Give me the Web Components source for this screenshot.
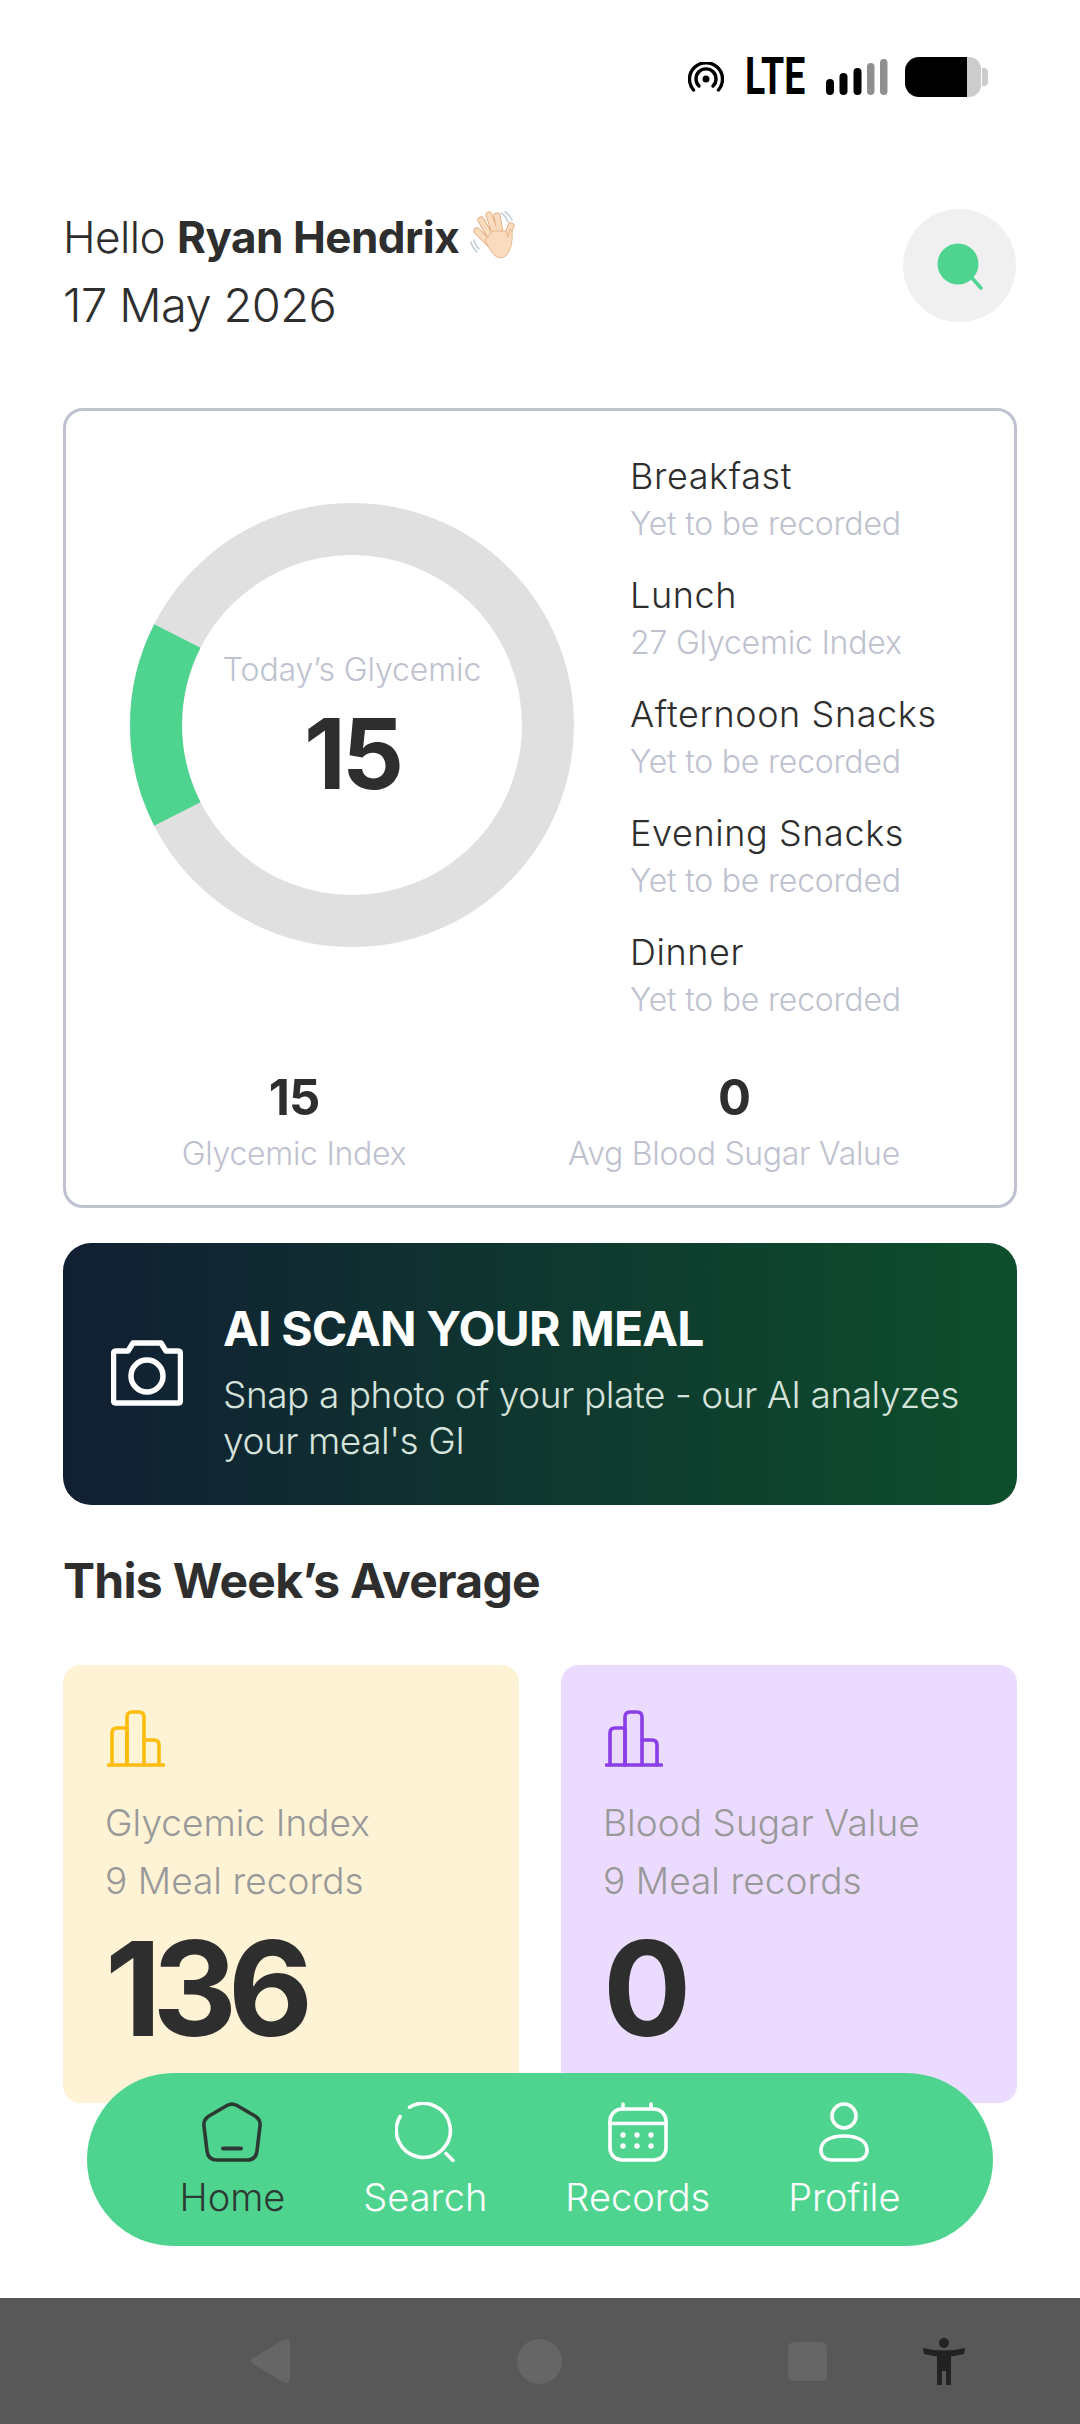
<!DOCTYPE html>
<html lang="en"><head><meta charset="utf-8"><title>Home</title>
<style>
html,body{margin:0;padding:0;background:#fff}
body{font-family:Inter,"Liberation Sans",sans-serif;color:#2e2e2e}
</style></head><body>
<app-screen>
  <status-bar></status-bar>
  <home-header name="Ryan Hendrix" date="17 May 2026"></home-header>
  <glycemic-card>
    <meal-row name="Breakfast" note="Yet to be recorded"></meal-row>
    <meal-row name="Lunch" note="27 Glycemic Index"></meal-row>
    <meal-row name="Afternoon Snacks" note="Yet to be recorded"></meal-row>
    <meal-row name="Evening Snacks" note="Yet to be recorded"></meal-row>
    <meal-row name="Dinner" note="Yet to be recorded"></meal-row>
  </glycemic-card>
  <scan-banner></scan-banner>
  <section-title>This Week’s Average</section-title>
  <week-grid>
    <week-card color="#fff3d6" stroke="#fdbc0d" label="Glycemic Index" value="136"></week-card>
    <week-card color="#ebdcff" stroke="#8a3ee8" label="Blood Sugar Value" value="0"></week-card>
  </week-grid>
  <float-nav slot="overlay">
    <nav-item label="Home" active><svg viewBox="0 0 60 60" width="60" height="60" fill="none" stroke="currentColor" stroke-width="3.6" stroke-linecap="round" stroke-linejoin="round"><path d="M25 3.5Q30 .8 35 3.5L53 14Q59 18 58 24L55 49Q54 58 45 58H15Q6 58 5 49L2 24Q1 18 7 14Z"/><path d="M21 46.500H39" stroke-width="4"/></svg></nav-item>
    <nav-item label="Search"><svg viewBox="0 0 60 60" width="60" height="60" fill="none" stroke="currentColor" stroke-width="3.6" stroke-linecap="round"><path d="M14.500 5.200A27 27 0 1 1 5.200 14.500"/><path d="M51 51.500L58 58.500"/></svg></nav-item>
    <nav-item label="Records"><svg viewBox="0 0 60 60" width="60" height="60" fill="none" stroke="currentColor" stroke-width="3.6" stroke-linecap="round"><rect x="2" y="7" width="56" height="51" rx="12"/><path d="M2 21.500H58M15 2V7M43 2V7"/><g fill="currentColor" stroke="none"><circle cx="15" cy="33" r="2.700"/><circle cx="29" cy="33" r="2.700"/><circle cx="43" cy="33" r="2.700"/><circle cx="15" cy="44" r="2.700"/><circle cx="29" cy="44" r="2.700"/><circle cx="43" cy="44" r="2.700"/></g></svg></nav-item>
    <nav-item label="Profile"><svg viewBox="0 0 50 60" width="50" height="60" fill="none" stroke="currentColor" stroke-width="3.600"><circle cx="25" cy="14" r="12"/><path d="M25 34C37 34 48 38 48 48C48 55 43 58 37 58H13C7 58 2 55 2 48C2 38 13 34 25 34Z"/></svg></nav-item>
  </float-nav>
  <system-nav></system-nav>
</app-screen>
<script>
function def(name, css, html){
  customElements.define(name, class extends HTMLElement{
    connectedCallback(){
      if(this.shadowRoot) return;
      const r=this.attachShadow({mode:'open'});
      const h=typeof html==='function'?html(this):html;
      r.innerHTML='<style>'+css+'</style>'+h;
    }
  });
}
def('app-screen',`:host{display:block;position:relative;width:1080px;height:2424px;overflow:hidden;background:#fff}
.col{display:flex;flex-direction:column;height:100%}`,
`<div class="col"><slot></slot></div><slot name="overlay"></slot>`);

def('status-bar',`:host{display:flex;align-items:center;justify-content:flex-end;height:154px;padding:0 92px 0 0;box-sizing:border-box;width:1080px;color:#000}
.in{display:flex;align-items:center;height:40px}
.lte{display:inline-block;font:700 52px/40px Roboto,sans-serif;width:62px;margin:0 19px 0 21px;transform:scaleX(.72);transform-origin:left center;white-space:nowrap}
svg{display:block}`,
`<div class="in"><svg width="36" height="30" viewBox="0 0 36 30" fill="none" stroke="#000" stroke-width="3.400" stroke-linecap="round"><circle cx="18" cy="17" r="3.500" fill="#000" stroke="none"/><path d="M11 24A10 10 0 1 1 25 24"/><path d="M5.500 28A16.500 16.500 0 1 1 30.500 28"/></svg>
<span class="lte">LTE</span>
<svg width="62" height="36" viewBox="0 0 62 36"><g fill="#000"><rect x="0" y="20" width="8" height="16" rx="4"/><rect x="13.500" y="14" width="8" height="22" rx="4"/><rect x="27.500" y="9" width="8" height="27" rx="4"/></g><g fill="#8f8f8f"><rect x="41" y="4" width="7.500" height="32" rx="3.700"/><rect x="54" y="0" width="7.500" height="36" rx="3.700"/></g></svg>
<svg style="margin-left:17px" width="83" height="40" viewBox="0 0 83 40"><path d="M14 0H62V40H14A14 14 0 0 1 0 26V14A14 14 0 0 1 14 0Z" fill="#000"/><path d="M62 0H64A12 12 0 0 1 76 12V28A12 12 0 0 1 64 40H62Z" fill="#ccc"/><path d="M77 11H79A4 4 0 0 1 83 15V25A4 4 0 0 1 79 29H77Z" fill="#ccc"/></svg></div>`);

def('home-header',`:host{display:flex;justify-content:space-between;align-items:flex-start;padding:0 64px 0 63px;height:254px;box-sizing:border-box;width:1080px}
.hi{font-size:44px;line-height:68px;font-weight:300;letter-spacing:-.5px;display:flex;align-items:center;white-space:pre;margin-top:49px}
.hi b{font-weight:700}
.date{font-size:47px;line-height:68px;font-weight:300;letter-spacing:-.6px}
.btn{width:113px;height:113px;border-radius:50%;background:#f0f0f0;display:flex;align-items:center;justify-content:center;margin-top:55px}
.wave{margin-left:11px;margin-top:-4px}`,
t=>`<div><div class="hi">Hello <b>${t.getAttribute('name')}</b><svg class="wave" width="46" height="48" viewBox="0 0 46 48"><g stroke="#c3ced6" stroke-width="1.500" fill="none" stroke-linecap="round"><path d="M31 2Q36 5 38 11"/><path d="M35 1Q40 4 42 9"/><path d="M1 31Q2 36 7 41"/><path d="M4 29Q5 34 9 38"/></g><g fill="none" stroke-linecap="round"><g stroke="#dfa777" stroke-width="7"><path d="M7 20L20 33M11 9L23 30M19 4L27 28M27 5L31 27M41 15L34 32"/></g><g stroke="#f9dcbe" stroke-width="5.400"><path d="M7 20L20 33M11 9L23 30M19 4L27 28M27 5L31 27M41 15L34 32"/></g></g><path d="M15 29L23 20H36L38 26L40 18L42 20Q43 27 41 35Q38 47 30 47Q22 46 15 29Z" fill="#f9dcbe" stroke="#e3ad7e" stroke-width=".8"/><path d="M22 25L28 26L31 25" stroke="#f9dcbe" stroke-width="5" fill="none"/></svg></div><div class="date">${t.getAttribute('date')}</div></div>
<div class="btn"><svg width="52" height="52" viewBox="0 0 52 52"><circle cx="24" cy="24" r="20.500" fill="#4fd490"/><path d="M38 38L47 48" stroke="#4fd490" stroke-width="3.500" stroke-linecap="round"/></svg></div>`);

def('glycemic-card',`:host{display:block;box-sizing:border-box;width:954px;height:800px;margin:0 63px;border:3px solid #bfc3d0;border-radius:20px;background:#fff}
.top{display:flex;height:657px}
.donut{display:grid;place-items:center;width:446px;height:446px;margin:91px 0 0 63px}
.donut>*{grid-area:1/1}
.mid{display:flex;flex-direction:column;align-items:center;margin-top:8px}
.t{font-size:32px;line-height:40px;font-weight:300;color:#bec2cf;letter-spacing:-.1px}
.n{font-size:97px;line-height:108px;font-weight:700;letter-spacing:-4px;color:#2e2e2e;margin-top:10px}
.list{display:flex;flex-direction:column;gap:23px;margin:40px 0 0 55px}
.stats{display:grid;grid-template-columns:440px 440px;padding-left:8px;text-align:center}
.v{font-size:49px;line-height:60px;font-weight:700;letter-spacing:-1px}
.l{font-size:32px;line-height:44px;font-weight:300;color:#bec2cf;letter-spacing:-.3px;margin-top:4px}`,
`<div class="top"><div class="donut"><svg width="446" height="446" viewBox="0 0 446 446"><circle cx="223" cy="223" r="196" fill="none" stroke="#e0e0e0" stroke-width="52"/><circle cx="223" cy="223" r="196" fill="none" stroke="#4fd490" stroke-width="52" pathLength="100" stroke-dasharray="15 85" stroke-dashoffset="7.500" transform="rotate(180 223 223)"/></svg><div class="mid"><div class="t">Today’s Glycemic</div><div class="n">15</div></div></div><div class="list"><slot></slot></div></div>
<div class="stats"><div><div class="v">15</div><div class="l">Glycemic Index</div></div><div><div class="v">0</div><div class="l">Avg Blood Sugar Value</div></div></div>`);

def('meal-row',`:host{display:block;white-space:nowrap}
.a{font-size:36px;line-height:50px;font-weight:300;letter-spacing:.6px;color:#2e2e2e}
.b{font-size:32px;line-height:46px;font-weight:300;color:#bec2cf;letter-spacing:-.2px}`,
t=>`<div class="a">${t.getAttribute('name')}</div><div class="b">${t.getAttribute('note')}</div>`);

def('scan-banner',`:host{display:flex;align-items:center;box-sizing:border-box;width:954px;height:262px;margin:35px 63px 0;border-radius:28px;background:linear-gradient(90deg,#111f33,#0d4f2c);padding:0 0 0 48px;color:#fff}
svg{flex:none;display:block;margin-right:40px;margin-top:-2px}
.w{padding-top:15px}
.t{font-size:48px;line-height:60px;font-weight:700;letter-spacing:-.85px;white-space:nowrap}
.s{font-size:37px;line-height:46px;font-weight:300;letter-spacing:-.45px;color:#d6e3dc;margin-top:13px;width:780px}`,
`<svg width="72" height="66" viewBox="0 0 72 66" fill="none" stroke="#fff" stroke-width="5.500" stroke-linejoin="round"><path d="M5 11H17L22 3H50L55 11H67Q69.500 11 69.500 14V60Q69.500 63 67 63H5Q2.500 63 2.500 60V14Q2.500 11 5 11Z"/><circle cx="36" cy="36" r="16"/></svg><div class="w"><div class="t">AI SCAN YOUR MEAL</div><div class="s">Snap a photo of your plate - our AI analyzes your meal's GI</div></div>`);

def('section-title',`:host{display:block;padding:0 63px;margin-top:46px;font-size:48px;line-height:60px;font-weight:700;letter-spacing:-.7px;color:#2e2e2e;white-space:nowrap}`,`<slot></slot>`);

def('week-grid',`:host{display:grid;grid-template-columns:456px 456px;gap:42px;padding:0 63px;margin-top:54px}`,`<slot></slot>`);

def('week-card',`:host{display:block;box-sizing:border-box;height:438px;border-radius:18px;padding:45px 0 0 42px;white-space:nowrap}
svg{display:block;margin-left:2px}
.l{font-size:37px;line-height:58px;font-weight:300;color:#999;letter-spacing:.05px}
.first{margin-top:26px}
.v{font-size:131px;line-height:130px;font-weight:700;letter-spacing:-9px;color:#2e2e2e;margin-top:14px}`,
t=>{t.style.background=t.getAttribute('color');const s=t.getAttribute('stroke');return `<svg width="58" height="58" viewBox="0 0 58 58" fill="none" stroke="${s}" stroke-width="3.600" stroke-linecap="round" stroke-linejoin="round"><path d="M1.500 55H56.500"/><path d="M5 55V23Q5 18 10 18H20V55"/><path d="M20 55V7Q20 2 25 2H32Q37 2 37 7V55"/><path d="M37 30H47Q52 30 52 35V55"/></svg><div class="l first">${t.getAttribute('label')}</div><div class="l">9 Meal records</div><div class="v">${t.getAttribute('value')}</div>`});

def('float-nav',`:host{position:absolute;left:87px;top:2073px;width:906px;height:173px;border-radius:87px;background:#4fd490;display:flex;justify-content:center;gap:78px;padding-top:29px;box-sizing:border-box}`,`<slot></slot>`);

def('nav-item',`:host{display:flex;flex-direction:column;align-items:center;color:#fff;font-size:38px;font-weight:300;line-height:46px;white-space:nowrap}
:host([active]){color:#2c3a33}
.x{height:60px;display:flex;justify-content:center;margin-bottom:12px}`,
t=>`<div class="x"><slot></slot></div><div>${t.getAttribute('label')}</div>`);

def('system-nav',`:host{position:absolute;left:0;right:0;bottom:0;height:126px;background:#585858;display:block}
.r{display:grid;grid-template-columns:repeat(3,1fr);align-items:center;height:100%;padding:0 250px;box-sizing:border-box}
.a{position:absolute;left:923px;top:40px}`,
`<div class="r"><svg width="40" height="44" viewBox="0 0 40 44" style="justify-self:start"><path d="M33 1Q40 -2 40 5V39Q40 46 33 43L3 25Q-1 22 3 19Z" fill="#666"/></svg><svg width="45" height="45" viewBox="0 0 45 45" style="justify-self:center;margin-left:-1px"><circle cx="22.500" cy="22.500" r="22.500" fill="#666"/></svg><svg width="39" height="39" viewBox="0 0 39 39" style="justify-self:end;margin-right:3px"><rect width="39" height="39" rx="6" fill="#666"/></svg></div>
<svg class="a" width="42" height="48" viewBox="0 0 42 48" fill="#222"><circle cx="21" cy="5" r="5"/><path d="M0 10Q21 15 42 10L41 16L28 18.500V47H23V33H19V47H14V18.500L1 16Z"/></svg>`);
</script>
</body></html>
